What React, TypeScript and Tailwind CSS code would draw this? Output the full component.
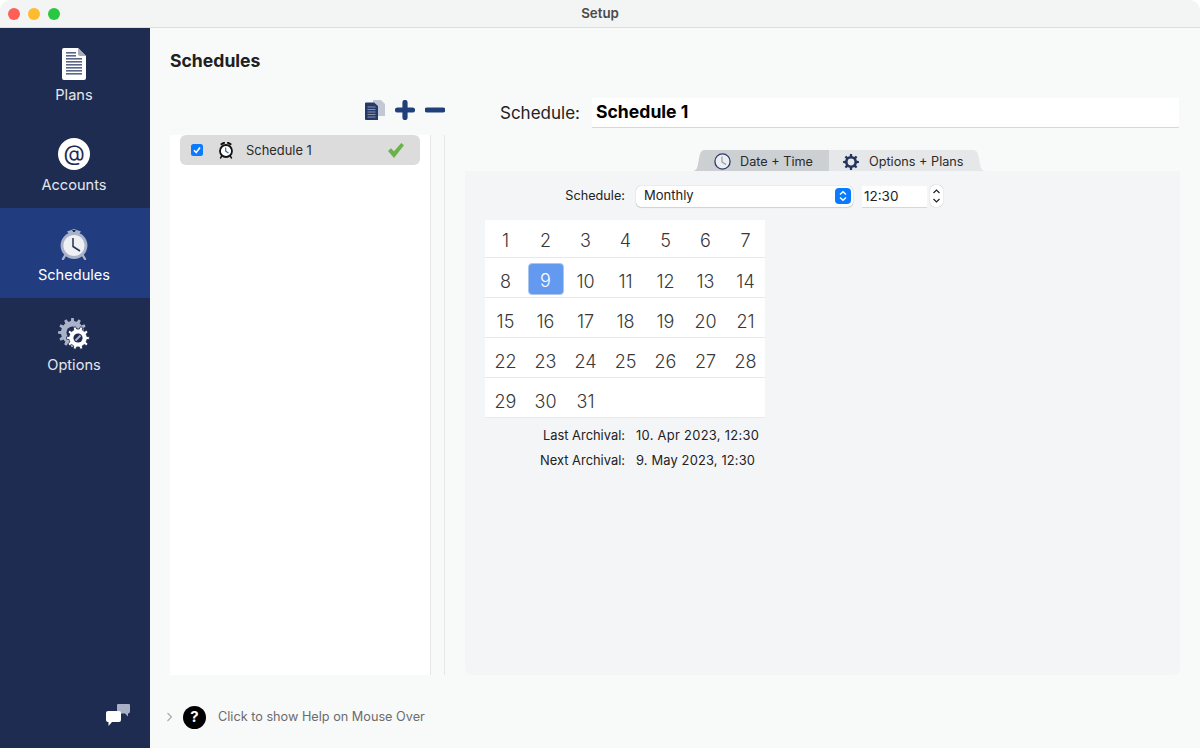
import React from "react";

const font = { fontFamily: "Inter, 'Liberation Sans', sans-serif" };

function PlansIcon() {
  return (
    <svg width="24" height="32" viewBox="0 0 24 32">
      <path d="M2 0H16L24 8V30a2 2 0 0 1-2 2H2a2 2 0 0 1-2-2V2a2 2 0 0 1 2-2Z" fill="#fff" />
      <path d="M16 0L24 8H18a2 2 0 0 1-2-2Z" fill="#a9adb8" />
      {[3, 6, 9, 12, 15, 18, 21, 24].map((y, i) => (
        <rect key={y} x="4" y={y + 1} width={i < 2 ? 10 : 16} height="1.6" fill="#5c6688" />
      ))}
    </svg>
  );
}

function AtIcon() {
  return (
    <div className="flex h-8 w-8 items-center justify-center rounded-full bg-white pb-[2px] text-[22px] font-normal leading-none text-[#1f2c51]">
      @
    </div>
  );
}

function ClockIcon() {
  return (
    <svg width="28" height="32" viewBox="0 0 28 32">
      <path d="M7 3.5 L14 1 L21 3.5 L19 6 H9 Z" fill="#a9b2c8" />
      <path d="M12 2h4l-2 3Z" fill="#1f2c51" />
      <path d="M6 26 L3 31 M22 26 L25 31" stroke="#a9b2c8" strokeWidth="2.4" strokeLinecap="round" />
      <circle cx="14" cy="17.5" r="13.4" fill="#a9b2c8" />
      <circle cx="14" cy="17.5" r="10.6" fill="#eef0f4" />
      <path d="M13 10V18.5L20 23" fill="none" stroke="#26304f" strokeWidth="1.5" />
    </svg>
  );
}

function gearPath(cx: number, cy: number, ro: number, ri: number, teeth: number) {
  let d = "";
  const step = (Math.PI * 2) / teeth;
  for (let i = 0; i < teeth; i++) {
    const a = i * step;
    const pts = [
      [ri, a - step * 0.5],
      [ri, a - step * 0.27],
      [ro, a - step * 0.17],
      [ro, a + step * 0.17],
      [ri, a + step * 0.27],
    ];
    pts.forEach(([r, t], k) => {
      d += `${i === 0 && k === 0 ? "M" : "L"}${(cx + r * Math.cos(t)).toFixed(2)} ${(cy + r * Math.sin(t)).toFixed(2)}`;
    });
  }
  return d + "Z";
}

function OptionsIcon() {
  return (
    <svg width="32" height="32" viewBox="0 0 32 32">
      <path d={gearPath(14.5, 14.5, 14.5, 11.5, 12)} fill="#a9b2c8" />
      <circle cx="14.5" cy="14.5" r="6" fill="#1f2c51" />
      <path d={gearPath(20, 20, 11.5, 9, 10)} fill="#fff" stroke="#1f2c51" strokeWidth="0.8" />
      <circle cx="20" cy="20" r="4.6" fill="#1f2c51" />
      <path d="M17.5 22.5L22.5 17.5" stroke="#a9b2c8" strokeWidth="2" />
    </svg>
  );
}

function NavItem({ label, icon, active }: { label: string; icon: React.ReactNode; active?: boolean }) {
  return (
    <div
      className={`flex h-[90px] flex-col items-center pr-[2px] pt-[20px] ${active ? "bg-[#223c80] text-white" : "text-[#e4e7ef]"}`}
    >
      <div className="flex h-[32px] w-[32px] items-center justify-center">{icon}</div>
      <div className="mt-[5px] text-[14.6px] leading-[20px]">{label}</div>
    </div>
  );
}

function CopyIcon() {
  return (
    <svg width="20" height="20" viewBox="0 0 20 20">
      <path d="M8 0H16L20 4V16H8Z" fill="#c3c8d4" />
      <path d="M1 2.5H9L13 6V20H1a1 1 0 0 1-1-1V3.5a1 1 0 0 1 1-1Z" fill="#233a6b" />
      <path d="M2.5 7H10.5M2.5 9.5H10.5M2.5 12H10.5M2.5 14.5H10.5M2.5 17H10.5" stroke="#8a93a8" strokeWidth="1.2" />
    </svg>
  );
}

function SmallAlarm() {
  return (
    <svg width="16" height="17" viewBox="0 0 16 17">
      <path d="M3.5 2.2L6 .8M12.5 2.2L10 .8" stroke="#111" strokeWidth="2" strokeLinecap="round" />
      <path d="M3.5 14.5L2.5 16M12.5 14.5L13.5 16" stroke="#111" strokeWidth="1.4" strokeLinecap="round" />
      <circle cx="8" cy="9" r="6" fill="#fff" stroke="#111" strokeWidth="1.8" />
      <path d="M7.7 5.5V9.2L10.5 11" fill="none" stroke="#3a5a8c" strokeWidth="1.1" />
    </svg>
  );
}

function TabClock() {
  return (
    <svg width="17" height="17" viewBox="0 0 17 17">
      <circle cx="8.5" cy="8.5" r="7.6" fill="#eceef1" stroke="#2b3c6b" strokeWidth="1.3" />
      <path d="M8 3.5V9L12 11.5" fill="none" stroke="#8e96a8" strokeWidth="1.1" />
    </svg>
  );
}

function TabGear() {
  return (
    <svg width="16" height="16" viewBox="0 0 16 16">
      <path fillRule="evenodd" d={gearPath(8, 8, 8, 6, 8) + "M8 4.6a3.4 3.4 0 1 0 0 6.8a3.4 3.4 0 1 0 0-6.8Z"} fill="#23345f" />
    </svg>
  );
}

const rows = [
  [1, 2, 3, 4, 5, 6, 7],
  [8, 9, 10, 11, 12, 13, 14],
  [15, 16, 17, 18, 19, 20, 21],
  [22, 23, 24, 25, 26, 27, 28],
  [29, 30, 31],
];

function Calendar() {
  return (
    <div className="w-[280px] bg-white">
      {rows.map((row, r) => (
        <div
          key={r}
          className={`grid grid-cols-7 border-b border-[#e8e8e8] ${r === 0 ? "h-[38px]" : "h-[40px]"}`}
        >
          {row.map((n) => (
            <div key={n} className="flex justify-center pl-[1px]">
              {n === 9 ? (
                <div className="mt-[5px] flex h-[32px] w-[36px] items-center justify-center rounded-[4px] border border-[#a9c6ee] bg-[#639af0] pt-[3px] text-[18px] font-light text-white">
                  {n}
                </div>
              ) : (
                <span
                  className={`text-[18px] font-light leading-[18px] text-[#383838] ${r === 0 ? "mt-[12px]" : "mt-[15px]"}`}
                >
                  {n}
                </span>
              )}
            </div>
          ))}
        </div>
      ))}
    </div>
  );
}

export default function App() {
  return (
    <div style={font} className="h-[748px] w-[1200px] overflow-hidden bg-white text-[#222]">
      <div className="flex h-full flex-col overflow-hidden rounded-t-[10px]">
        <div className="relative flex h-[28px] shrink-0 items-center justify-center border-b border-[#dfdfdf] bg-[#f3f5f4]">
          <div className="absolute left-[8px] top-[8px] flex gap-[8px]">
            <div className="h-[12px] w-[12px] rounded-full bg-[#fe5f57]" />
            <div className="h-[12px] w-[12px] rounded-full bg-[#febb2e]" />
            <div className="h-[12px] w-[12px] rounded-full bg-[#29c840]" />
          </div>
          <span className="text-[13.3px] font-semibold text-[#4a4a4a]">Setup</span>
        </div>
        <div className="flex min-h-0 flex-1">
          <aside className="flex w-[150px] shrink-0 flex-col bg-[#1f2c51]">
            <NavItem label="Plans" icon={<PlansIcon />} />
            <NavItem label="Accounts" icon={<AtIcon />} />
            <NavItem label="Schedules" icon={<ClockIcon />} active />
            <NavItem label="Options" icon={<OptionsIcon />} />
            <div className="mt-auto flex justify-end pb-[21px] pr-[20px]">
              <svg width="24" height="23" viewBox="0 0 24 23">
                <path d="M11 1.5a2 2 0 0 1 2-2h9a2 2 0 0 1 2 2v6a2 2 0 0 1-2 2v3l-3-3h-6a2 2 0 0 1-2-2Z" fill="#a9b0c6" />
                <path d="M2 7h11a2 2 0 0 1 2 2v7a2 2 0 0 1-2 2H6l-3.5 4V18H2a2 2 0 0 1-2-2V9a2 2 0 0 1 2-2Z" fill="#fff" />
              </svg>
            </div>
          </aside>
          <main className="flex min-w-0 flex-1 flex-col bg-[#f8f9f9] pl-[20px] pr-[20px]">
            <h1 className="mt-[22px] text-[17.6px] font-bold leading-[22px] text-[#202020]">Schedules</h1>
            <div className="mt-[26px] flex min-h-0 flex-1">
              <div className="flex w-[260px] shrink-0 flex-col">
                <div className="mr-[-15px] flex h-[37px] items-start justify-end gap-[10px] pt-[2px]">
                  <CopyIcon />
                  <svg width="20" height="20" viewBox="0 0 20 20">
                    <path d="M10 2.5v15M2.5 10h15" stroke="#20407c" strokeWidth="5.2" strokeLinecap="round" />
                  </svg>
                  <svg width="20" height="20" viewBox="0 0 20 20">
                    <path d="M2 10h16" stroke="#20407c" strokeWidth="5" strokeLinecap="round" />
                  </svg>
                </div>
                <div className="flex-1 bg-white px-[10px]">
                  <div className="flex h-[30px] items-center rounded-[6px] bg-[#dcdcdc] pl-[11px] pr-[16px]">
                    <div className="flex h-[12px] w-[12px] items-center justify-center rounded-[2.5px] bg-[#0a7bff]">
                      <svg width="10" height="10" viewBox="0 0 10 10">
                        <path d="M2 5.2L4.2 7.5L8 2.5" fill="none" stroke="#fff" strokeWidth="1.6" />
                      </svg>
                    </div>
                    <div className="ml-[15px] flex w-[16px] justify-center">
                      <SmallAlarm />
                    </div>
                    <span className="ml-[12px] pt-[1px] text-[12.9px] text-[#2a2a2a]">Schedule 1</span>
                    <svg className="ml-auto" width="16" height="15" viewBox="0 0 16 15">
                      <path d="M0 8L3 5.2L6 8.2L13.2 0L16 2.2L6 15Z" fill="#6bb24a" />
                    </svg>
                  </div>
                </div>
              </div>
              <div className="mt-[37px] h-auto w-[15px] shrink-0 border-x border-[#e6e6e6]" />
              <div className="ml-[20px] flex min-w-0 flex-1 flex-col">
                <div className="flex h-[36px] items-start">
                  <span className="ml-[35px] mt-[4px] text-[17px] leading-[22px] text-[#222]">Schedule:</span>
                  <div className="ml-[12px] mr-[1px] h-[30px] flex-1 border-b border-[#d8d8d8] bg-white pl-[4px] text-[17.6px] font-bold leading-[28px] text-black">
                    Schedule 1
                  </div>
                </div>
                <div className="mt-[16px] flex h-[21px] items-end pl-[227px] text-[12.7px]">
                  <svg width="12" height="21" viewBox="0 0 12 21">
                    <path d="M0 21C4 21 5 19 6 14L7.5 6C8.3 2 10 0 12 0V21Z" fill="#cdd0d3" />
                  </svg>
                  <div className="flex h-[21px] w-[125px] items-center bg-[#cdd0d3] pl-[10px] pt-[2px]">
                    <TabClock />
                    <span className="ml-[9px] pt-[1px] text-[#2a2a2a]">Date + Time</span>
                  </div>
                  <div className="flex h-[21px] w-[145px] items-center bg-[#e6e7e9] pl-[14px] pt-[2px]">
                    <TabGear />
                    <span className="ml-[10px] pt-[1px] text-[#2a2a2a]">Options + Plans</span>
                  </div>
                  <svg width="12" height="21" viewBox="0 0 12 21">
                    <path d="M12 21C8 21 7 19 6 14L4.5 6C3.7 2 2 0 0 0V21Z" fill="#e6e7e9" />
                  </svg>
                </div>
                <div className="flex-1 rounded-b-[6px] bg-[#f4f5f7] pl-[20px]">
                  <div className="mt-[13px] flex h-[24px] items-center">
                    <span className="ml-[80px] w-[60px] text-right text-[12.7px] text-[#222]">Schedule:</span>
                    <div className="relative ml-[11px] flex h-[21px] w-[217px] items-center rounded-[5px] bg-white pl-[8px] text-[13px] shadow-[0_0_1px_rgba(0,0,0,0.35),0_1px_1px_rgba(0,0,0,0.12)]">
                      Monthly
                      <div className="absolute right-[2px] top-[2.5px] flex h-[16px] w-[16px] items-center justify-center rounded-[4px] bg-[#0a7bff]">
                        <svg width="10" height="12" viewBox="0 0 10 12">
                          <path d="M2 4.5L5 1.8L8 4.5M2 7.5L5 10.2L8 7.5" fill="none" stroke="#fff" strokeWidth="1.4" />
                        </svg>
                      </div>
                    </div>
                    <div className="ml-[9px] mt-[2px] flex h-[22px] w-[65px] items-center border-b border-[#d8d8d8] bg-white pl-[2px] text-[13.5px] text-[#222]">
                      12:30
                    </div>
                    <div className="ml-[3px] flex h-[22px] w-[13px] flex-col items-center justify-center rounded-[5px] bg-white shadow-[0_0_1px_rgba(0,0,0,0.35)]">
                      <svg width="9" height="20" viewBox="0 0 9 20">
                        <path d="M1.5 7L4.5 4L7.5 7M1.5 13L4.5 16L7.5 13" fill="none" stroke="#222" strokeWidth="1.2" />
                      </svg>
                    </div>
                  </div>
                  <div className="mt-[12px]">
                    <Calendar />
                  </div>
                  <div className="mt-[8px] grid grid-cols-[140px_auto] gap-x-[11px] gap-y-[5px] text-[12.9px] leading-[20px] text-[#222]">
                    <span className="text-right">Last Archival:</span>
                    <span className="tracking-[0.3px]">10. Apr 2023, 12:30</span>
                    <span className="text-right">Next Archival:</span>
                    <span className="tracking-[0.15px]">9. May 2023, 12:30</span>
                  </div>
                </div>
              </div>
            </div>
            <div className="ml-[-4px] flex h-[73px] shrink-0 items-center pt-[11px]">
              <svg width="8" height="10" viewBox="0 0 8 10">
                <path d="M1.5 1L5.5 5L1.5 9" fill="none" stroke="#a8a8a8" strokeWidth="1.1" />
              </svg>
              <div className="ml-[9px] flex h-[23px] w-[23px] items-center justify-center rounded-full bg-black text-[15px] font-bold text-white">
                ?
              </div>
              <span className="ml-[12px] text-[12.7px] text-[#6c6c6c]">Click to show Help on Mouse Over</span>
            </div>
          </main>
        </div>
      </div>
    </div>
  );
}
